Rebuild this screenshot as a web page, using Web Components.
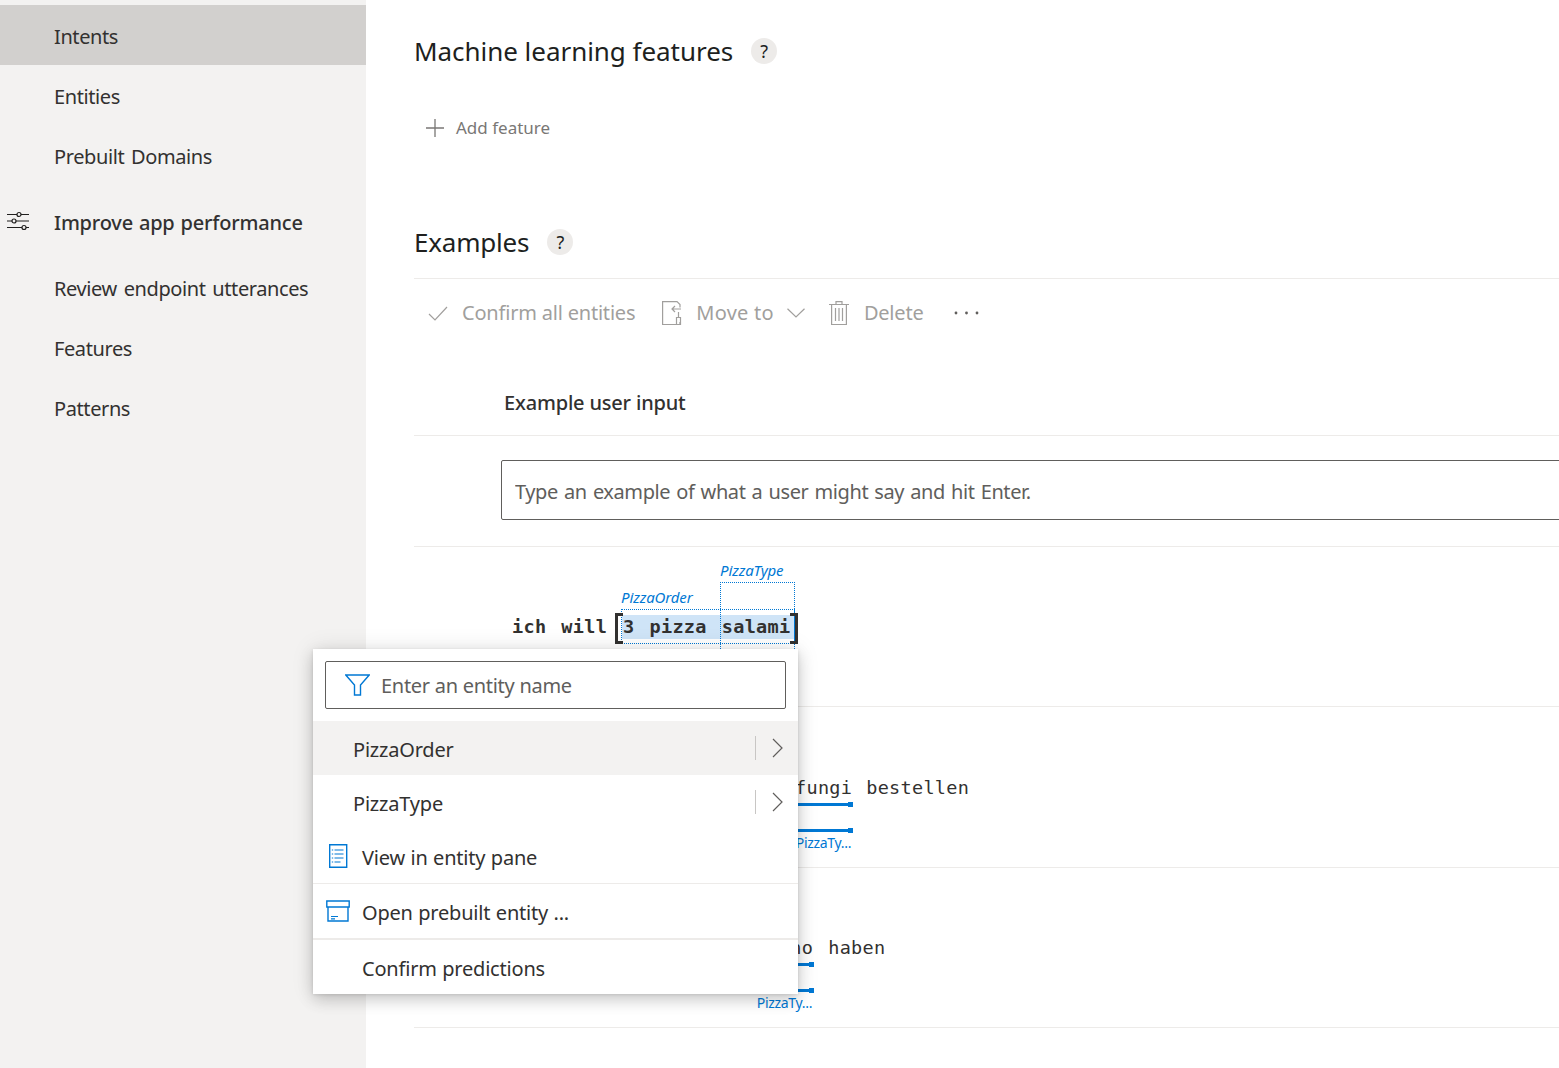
<!DOCTYPE html>
<html lang="en">
<head>
<meta charset="utf-8">
<title>Intents</title>
<style>
    html, body { margin: 0; height: 1068px; overflow: hidden; background: #fff; }
    body { font-family: "Noto Sans", "Liberation Sans", sans-serif; color: #323130; }
</style>
</head>
<body>
<app-shell>
    <side-nav slot="nav">
        <nav-item active>Intents</nav-item>
        <nav-item>Entities</nav-item>
        <nav-item>Prebuilt Domains</nav-item>
        <nav-item heading>
            <svg slot="icon" width="24" height="24" viewBox="0 0 24 24" fill="none" stroke="#201f1e" stroke-width="1.200">
                <path d="M1 4.500h10M15 4.500h8M1 11h5M10 11h13M1 17.500h15M20 17.500h3"/>
                <circle cx="13" cy="4.500" r="2"/><circle cx="8" cy="11" r="2"/><circle cx="18" cy="17.500" r="2"/>
            </svg>
            Improve app performance
        </nav-item>
        <nav-item>Review endpoint utterances</nav-item>
        <nav-item>Features</nav-item>
        <nav-item>Patterns</nav-item>
    </side-nav>

    <section-title>Machine learning features</section-title>
    <add-feature>Add feature</add-feature>
    <section-title second>Examples</section-title>

    <command-bar>
        <command-button style="--gap:14px">
            <svg slot="icon" width="20" height="20" viewBox="0 0 20 20" fill="none" stroke="#a19f9d" stroke-width="1.200"><path d="M1 11l6 6L19 4"/></svg>
            Confirm all entities
        </command-button>
        <command-button style="margin-left:27px;letter-spacing:.25px">
            <svg slot="icon" width="22" height="24" viewBox="0 0 22 24" fill="none" stroke="#a19f9d" stroke-width="1.200">
                <path d="M15 23.500H.6V.6h14.400l3 3v3M18 21v2.500h-3"/>
                <path d="M19 8H10M13 5l-3 3 3 3"/>
                <path d="M16.500 11v5M14.500 16.500h4v7h-4z"/>
            </svg>
            Move to
            <svg slot="after" width="18" height="10" viewBox="0 0 18 10" fill="none" stroke="#a19f9d" stroke-width="1.200"><path d="M.5.800L9 9 17.500.800"/></svg>
        </command-button>
        <command-button style="margin-left:24px;--gap:15px">
            <svg slot="icon" width="20" height="24" viewBox="0 0 20 24" fill="none" stroke="#a19f9d" stroke-width="1.200">
                <path d="M0 3.500h20M7 3.500V.7h6v2.800M2.600 3.500v20h14.800v-20"/>
                <path d="M6.500 7v13M10 7v13M13.500 7v13"/>
            </svg>
            Delete
        </command-button>
        <command-button style="margin-left:30px">
            <svg width="25" height="6" viewBox="0 0 25 6" fill="#605e5c"><circle cx="2" cy="3" r="1.400"/><circle cx="12.500" cy="3" r="1.400"/><circle cx="23" cy="3" r="1.400"/></svg>
        </command-button>
    </command-bar>

    <table-head>Example user input</table-head>
    <example-input placeholder="Type an example of what a user might say and hit Enter."></example-input>

    <example-row offset="98" strong>
        <entity-token>ich</entity-token>
        <entity-token>will</entity-token>
        <selected-span>
            <entity-token>3</entity-token>
            <entity-token>pizza</entity-token>
            <entity-token>salami</entity-token>
        </selected-span>
    </example-row>
    <example-row offset="382" style="height:161px;gap:14px">
        <entity-token label="PizzaTy...">fungi</entity-token>
        <entity-token>bestellen</entity-token>
    </example-row>
    <example-row offset="342">
        <entity-token label="PizzaTy...">tonno</entity-token>
        <entity-token>haben</entity-token>
    </example-row>

    <entity-menu slot="overlay">
        <menu-item nested selected>PizzaOrder</menu-item>
        <menu-item nested>PizzaType</menu-item>
        <menu-item wide>
            <svg slot="icon" width="20" height="24" viewBox="0 0 20 24" fill="none" stroke="#0078d4" stroke-width="1.400">
                <path d="M1.700.8h17v22.400h-17z"/>
                <path d="M6.500 6h9M6.500 10h9M6.500 14h9M6.500 18h6M3.800 6h1.400M3.800 10h1.400M3.800 14h1.400M3.800 18h1.400" stroke-width="1.200"/>
            </svg>
            View in entity pane
        </menu-item>
        <menu-divider></menu-divider>
        <menu-item wide>
            <svg slot="icon" width="24" height="22" viewBox="0 0 24 22" fill="none" stroke="#0078d4" stroke-width="1.400">
                <path d="M.8 1h22.400v6H.8zM2 7v14h20V7"/><path d="M5 16.500h7M5 18.800h4" stroke-width="1.200"/>
            </svg>
            Open prebuilt entity ...
        </menu-item>
        <menu-divider thick></menu-divider>
        <menu-item wide>Confirm predictions</menu-item>
    </entity-menu>
</app-shell>

<script>
const UI_FONT = '"Noto Sans", "Liberation Sans", sans-serif';
const MONO_FONT = '"DejaVu Sans Mono", "Liberation Mono", monospace';

// tiny helper, every component is the same: open shadow + markup
class Base extends HTMLElement {
    constructor() {
        super();
        this.attachShadow({ mode: "open" });
        this.shadowRoot.innerHTML = this.constructor.markup;
    }
}

class AppShell extends Base {
    static markup = `
        <style>
            :host { display: grid; grid-template-columns: 366px 1fr; height: 1068px; position: relative; overflow: hidden; }
            main { min-width: 0; padding-left: 48px; overflow: hidden; }
        </style>
        <slot name="nav"></slot>
        <main><slot></slot></main>
        <slot name="overlay"></slot>`;
}

class SideNav extends Base {
    static markup = `
        <style>
            :host { display: block; background: #f3f2f1; padding-top: 5px; height: 1063px; }
        </style>
        <slot></slot>`;
}

class NavItem extends Base {
    static markup = `
        <style>
            :host { display: flex; align-items: center; box-sizing: border-box; height: 60px; padding-top: 2px; font-size: 20px; letter-spacing: -.4px; word-spacing: 2px; color: #323130; white-space: nowrap; }
            :host([active]) { background: #d2d0ce; }
            :host([heading]) { height: 72px; font-weight: 500; letter-spacing: -.2px; word-spacing: 1px; }
            .icon { width: 54px; flex: none; display: flex; padding-left: 6px; box-sizing: border-box; margin-top: -1px; }
        </style>
        <span class="icon"><slot name="icon"></slot></span>
        <slot></slot>`;
}

class SectionTitle extends Base {
    static markup = `
        <style>
            :host { display: flex; align-items: center; height: 102px; padding-bottom: 2px; font-size: 26px; letter-spacing: -.04px; color: #201f1e; }
            :host([second]) { height: 52px; margin-top: 64px; margin-bottom: 8px; letter-spacing: -.2px; }
            i { font: normal 18px ${UI_FONT}; letter-spacing: 0; width: 26px; height: 26px; border-radius: 50%; background: #edebe9; margin-left: 18px;
                display: flex; align-items: center; justify-content: center; }
        </style>
        <slot></slot><i>?</i>`;
}

class AddFeature extends Base {
    static markup = `
        <style>
            :host { display: flex; align-items: center; box-sizing: border-box; height: 48px; padding: 0 0 1px 12px; gap: 12px; font-size: 17px; color: #797775; }
            svg { display: block; margin-top: 1px; }
        </style>
        <svg width="18" height="18" viewBox="0 0 18 18" stroke="#797775" stroke-width="1.300"><path d="M9 0v18M0 9h18"/></svg>
        <slot></slot>`;
}

class CommandBar extends Base {
    static markup = `
        <style>
            :host { display: flex; align-items: center; height: 68px; padding-left: 14px; border-top: 1px solid #edebe9; margin-bottom: 24px; }
        </style>
        <slot></slot>`;
}

class CommandButton extends Base {
    static markup = `
        <style>
            :host { display: inline-flex; align-items: center; font-size: 20px; letter-spacing: -.2px; color: #a19f9d; white-space: nowrap; line-height: 26px; padding-bottom: 1px; }
            ::slotted([slot="icon"]) { margin-right: var(--gap, 12px); }
            ::slotted([slot="after"]) { margin-left: 13px; }
        </style>
        <slot name="icon"></slot>
        <slot></slot>
        <slot name="after"></slot>`;
}

class TableHead extends Base {
    static markup = `
        <style>
            :host { display: flex; align-items: center; box-sizing: border-box; height: 65px; padding: 0 0 1px 90px; font-size: 20px; font-weight: 500; letter-spacing: -.18px;
                    border-bottom: 1px solid #edebe9; color: #323130; }
        </style>
        <slot></slot>`;
}

class ExampleInput extends Base {
    static markup = `
        <style>
            :host { display: block; padding: 24px 0 26px 87px; border-bottom: 1px solid #edebe9; }
            input { display: block; box-sizing: border-box; width: calc(100% + 20px); height: 60px; border: 1px solid #605e5c; border-radius: 2px; padding: 2px 13px 0;
                    font: 20px ${UI_FONT}; letter-spacing: -.4px; word-spacing: 1.3px; outline: none; }
            input::placeholder { color: #605e5c; opacity: 1; }
        </style>
        <input>`;
    connectedCallback() {
        this.shadowRoot.querySelector("input").placeholder = this.getAttribute("placeholder");
    }
}

class ExampleRow extends Base {
    static markup = `
        <style>
            :host { display: flex; align-items: center; gap: 15px; box-sizing: border-box; height: 160px; border-bottom: 1px solid #edebe9;
                    font: 18.5px ${MONO_FONT}; letter-spacing: .3px; color: #323130; }
            :host([strong]) { font-weight: bold; }
            .pad { flex: none; margin-right: -15px; }
        </style>
        <span class="pad"></span>
        <slot></slot>`;
    connectedCallback() {
        this.shadowRoot.querySelector(".pad").style.width = this.getAttribute("offset") + "px";
    }
}

class EntityToken extends Base {
    static markup = `
        <style>
            :host { display: inline-block; position: relative; white-space: nowrap; }
            .bar { position: absolute; left: 0; right: -1px; height: 3px; background: #0078d4; }
            .bar::after { content: ""; position: absolute; right: 0; top: -1px; width: 5px; height: 5px; background: #0078d4; }
            .one { top: 26px; } .two { top: 52px; }
            .label { position: absolute; top: 56px; right: 1px; font: 14px ${UI_FONT}; letter-spacing: -.3px; color: #0078d4; }
        </style>
        <slot></slot>`;
    connectedCallback() {
        const label = this.getAttribute("label");
        if (!label) return;
        this.shadowRoot.innerHTML += `<span class="bar one"></span><span class="bar two"></span><span class="label">${label}</span>`;
    }
}

// the two dotted entity boxes and brackets round the current selection
class SelectedSpan extends Base {
    static markup = `
        <style>
            :host { display: inline-flex; gap: 15px; position: relative; background: #cfe4f7; padding: 0 5px 0 1px; height: 24px; align-items: center; }
            .bracket { position: absolute; top: -2px; width: 5px; height: 25px; border: solid #323130; border-width: 3px 0; }
            .left { left: -7px; border-left: 3px solid #323130; }
            .right { right: -3px; border-right: 3px solid #323130; }
            .order { position: absolute; left: -1px; right: 0; top: -6px; height: 33px; border: 1px dotted #0078d4; }
            .type { position: absolute; left: 98px; right: 0; top: -33px; height: 68px; border: 1px dotted #0078d4; border-bottom: 0; }
            .name { position: absolute; font: italic 15px ${UI_FONT}; letter-spacing: -.15px; color: #0078d4; white-space: nowrap; }
        </style>
        <span class="order"></span>
        <span class="type"></span>
        <span class="name" style="left:-1px;top:-28px">PizzaOrder</span>
        <span class="name" style="left:98px;top:-55px">PizzaType</span>
        <span class="bracket left"></span><span class="bracket right"></span>
        <slot></slot>`;
}

class EntityMenu extends Base {
    static markup = `
        <style>
            :host { position: absolute; left: 313px; top: 649px; width: 485px; height: 345px; background: #fff; z-index: 2;
                    box-shadow: 0 6.4px 14.4px rgba(0,0,0,.16), 0 1.2px 3.6px rgba(0,0,0,.13), 0 0 22px rgba(0,0,0,.1); }
            .box { display: flex; align-items: center; gap: 11px; box-sizing: border-box; height: 48px; margin: 12px; padding-left: 19px;
                   border: 1px solid #605e5c; border-radius: 2px; font-size: 20px; letter-spacing: -.28px; color: #605e5c; }
        </style>
        <div class="box">
            <svg width="25" height="22" viewBox="0 0 25 22" fill="none" stroke="#0078d4" stroke-width="1.400"><path d="M.8 1h23.400l-8.700 10v10h-6V11z"/></svg>
            Enter an entity name
        </div>
        <slot></slot>`;
}

class MenuItem extends Base {
    static markup = `
        <style>
            :host { display: flex; align-items: center; box-sizing: border-box; height: 54px; padding: 2px 0 0 40px; position: relative; font-size: 20px; letter-spacing: -.2px; word-spacing: .5px; color: #323130; }
            :host([selected]) { background: #f3f2f1; }
            :host([wide]) { padding-left: 49px; }
            .icon { position: absolute; left: 13px; top: 0; bottom: 0; width: 24px; display: flex; align-items: center; justify-content: center; }
            .more { display: none; position: absolute; left: 442px; top: 15px; height: 24px; width: 30px; border-left: 1px solid #c8c6c4; }
            .more svg { position: absolute; left: 16px; top: 2px; }
            :host([nested]) .more { display: block; }
        </style>
        <span class="icon"><slot name="icon"></slot></span>
        <slot></slot>
        <span class="more"><svg width="11" height="20" viewBox="0 0 11 20" fill="none" stroke="#605e5c" stroke-width="1.200"><path d="M1 1l9 9-9 9"/></svg></span>`;
}

class MenuDivider extends Base {
    static markup = `
        <style>
            :host { display: block; height: 1px; background: #edebe9; }
            :host([thick]) { height: 2px; }
        </style>`;
}

customElements.define("app-shell", AppShell);
customElements.define("side-nav", SideNav);
customElements.define("nav-item", NavItem);
customElements.define("section-title", SectionTitle);
customElements.define("add-feature", AddFeature);
customElements.define("command-bar", CommandBar);
customElements.define("command-button", CommandButton);
customElements.define("table-head", TableHead);
customElements.define("example-input", ExampleInput);
customElements.define("example-row", ExampleRow);
customElements.define("entity-token", EntityToken);
customElements.define("selected-span", SelectedSpan);
customElements.define("entity-menu", EntityMenu);
customElements.define("menu-item", MenuItem);
customElements.define("menu-divider", MenuDivider);
</script>
</body>
</html>
